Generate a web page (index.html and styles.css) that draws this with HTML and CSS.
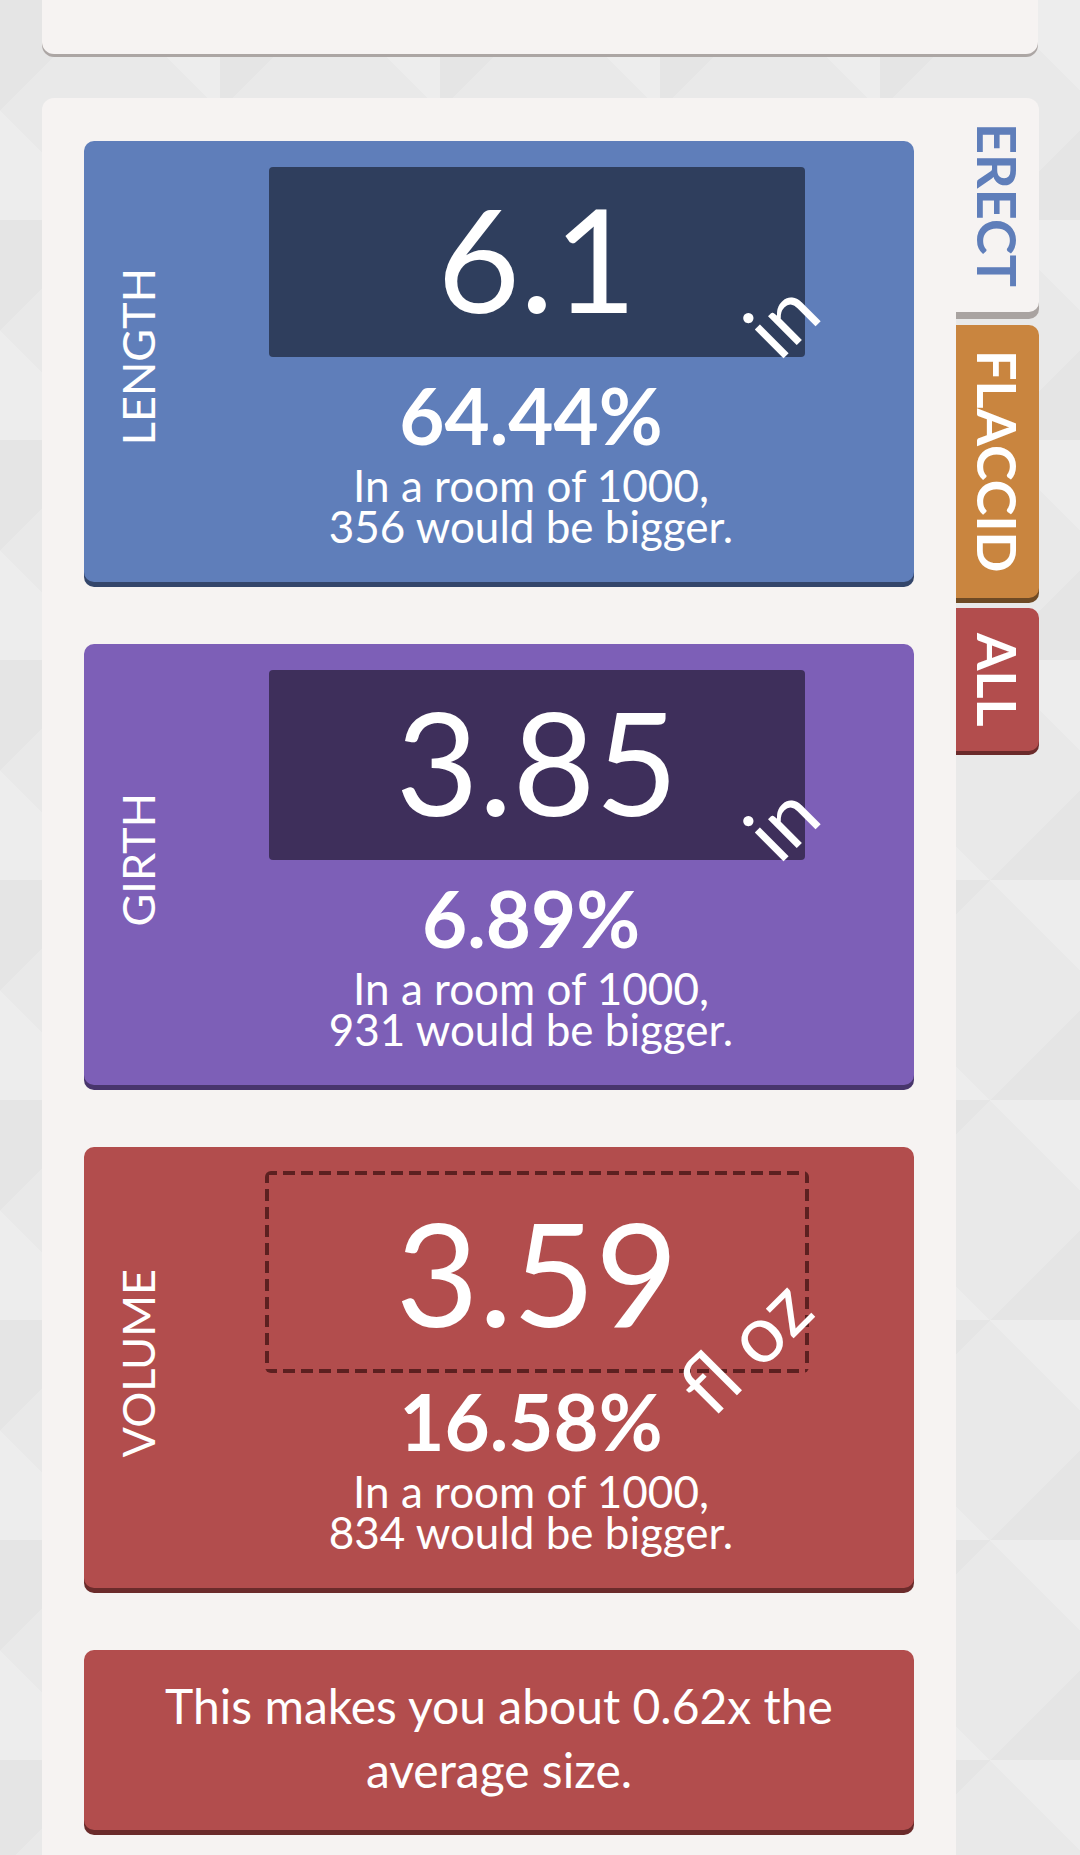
FILE: index.html
```html
<!DOCTYPE html>
<html lang="en">
<head>
    <meta charset="UTF-8">
    <meta name="viewport" content="width=device-width, initial-scale=1.0">
    <title>Size Calculator</title>
    <link rel="stylesheet" href="styles.css">
</head>
<body>
    <div class="top-card"></div>

    <main class="calc">
        <section class="results">
            <div class="stat stat-length">
                <div class="stat-label">LENGTH</div>
                <div class="stat-body">
                    <div class="value-box">
                        <span class="value">6.1</span>
                        <span class="unit">in</span>
                    </div>
                    <div class="percent">64.44%</div>
                    <p class="room">In a room of 1000,<br>356 would be bigger.</p>
                </div>
            </div>

            <div class="stat stat-girth">
                <div class="stat-label">GIRTH</div>
                <div class="stat-body">
                    <div class="value-box">
                        <span class="value">3.85</span>
                        <span class="unit">in</span>
                    </div>
                    <div class="percent">6.89%</div>
                    <p class="room">In a room of 1000,<br>931 would be bigger.</p>
                </div>
            </div>

            <div class="stat stat-volume">
                <div class="stat-label">VOLUME</div>
                <div class="stat-body">
                    <div class="value-box dashed">
                        <span class="value">3.59</span>
                        <span class="unit">fl oz</span>
                    </div>
                    <div class="percent">16.58%</div>
                    <p class="room">In a room of 1000,<br>834 would be bigger.</p>
                </div>
            </div>

            <div class="summary">This makes you about 0.62x the average size.</div>
        </section>

        <nav class="tabs">
            <a class="tab active" href="#">ERECT</a>
            <a class="tab flaccid" href="#">FLACCID</a>
            <a class="tab all" href="#">ALL</a>
        </nav>
    </main>
</body>
</html>
```

FILE: styles.css
```css
body {
    margin: 0;
    font-family: Lato, "Open Sans", sans-serif;
    color: #fff;
    background-color: #e9e9e9;
    background-image:
        linear-gradient(45deg, rgba(255, 255, 255, 0.2) 25%, transparent 25%, transparent 75%, rgba(255, 255, 255, 0.2) 75%),
        linear-gradient(-45deg, rgba(0, 0, 0, 0.015) 25%, transparent 25%, transparent 75%, rgba(0, 0, 0, 0.015) 75%);
    background-size: 220px 220px;
}

.top-card {
    height: 54px;
    margin: 0 42px;
    background-color: #f6f3f2;
    border-radius: 0 0 12px 12px;
    box-shadow: 0 3px 0 #aca6a4;
}

.calc {
    display: flex;
    align-items: flex-start;
    margin: 44px 41px 0 42px;
}

.results {
    flex: 1;
    padding: 43px 42px 43px 42px;
    background-color: #f6f3f2;
    border-radius: 12px 0 0 0;
}

/* measurement cards */
.stat {
    display: flex;
    padding: 26px 0 35px 0;
    margin-bottom: 62px;
    border-radius: 10px;
}

.stat-length {
    background-color: #5f7eba;
    box-shadow: 0 5px 0 #34466b;
}

.stat-girth {
    background-color: #7d5fb7;
    box-shadow: 0 5px 0 #48356c;
}

.stat-volume {
    background-color: #b24d4d;
    box-shadow: 0 5px 0 #6b2b2b;
}

.stat-label {
    writing-mode: vertical-rl;
    transform: rotate(180deg);
    align-self: center;
    width: 44px;
    margin-left: 32px;
    font-size: 45px;
    line-height: 44px;
}

.stat-body {
    flex: 1;
    text-align: center;
}

.value-box {
    position: relative;
    box-sizing: border-box;
    display: flex;
    align-items: center;
    justify-content: center;
    width: 536px;
    height: 190px;
    margin: 0 auto;
    padding-bottom: 10px;
    border-radius: 4px;
}

.stat-length .value-box {
    background-color: #2f3e5d;
}

.stat-girth .value-box {
    background-color: #3e2f5b;
}

/* volume has no filled box, only a dashed frame a little larger */
.value-box.dashed {
    width: 544px;
    height: 202px;
    margin: -2px auto -10px auto;
    padding-bottom: 2px;
    border-radius: 6px;
    background:
        repeating-linear-gradient(90deg, #5c2020 0 12px, transparent 12px 18px) left top / 100% 4px no-repeat,
        repeating-linear-gradient(90deg, #5c2020 0 12px, transparent 12px 18px) left bottom / 100% 4px no-repeat,
        repeating-linear-gradient(180deg, #5c2020 0 12px, transparent 12px 18px) left top / 4px 100% no-repeat,
        repeating-linear-gradient(180deg, #5c2020 0 12px, transparent 12px 18px) right top / 4px 100% no-repeat;
}

.value {
    font-size: 143px;
    line-height: 1;
}

.unit {
    position: absolute;
    right: -7px;
    bottom: -1px;
    font-size: 80px;
    line-height: 80px;
    white-space: nowrap;
    transform: rotate(-45deg);
}

.dashed .unit {
    right: -8px;
    bottom: -12px;
}

.percent {
    margin-top: 16px;
    padding-right: 12px;
    font-size: 78px;
    font-weight: bold;
    line-height: 84px;
}

.room {
    margin: 8px 0 0 0;
    padding-right: 12px;
    font-size: 44px;
    line-height: 41px;
}

.summary {
    padding: 24px 30px 28px 30px;
    font-size: 48px;
    line-height: 64px;
    text-align: center;
    background-color: #b24d4d;
    border-radius: 10px;
    box-shadow: 0 5px 0 #6b2b2b;
}

/* side tabs */
.tabs {
    display: flex;
    flex-direction: column;
    width: 83px;
}

.tab {
    writing-mode: vertical-rl;
    padding: 25px 0;
    margin-bottom: 10px;
    font-size: 54px;
    font-weight: bold;
    line-height: 83px;
    color: #fff;
    text-decoration: none;
    border-radius: 0 10px 10px 0;
}

.tab.active {
    margin-bottom: 13px;
    color: #5f7eba;
    background-color: #f6f3f2;
    border-radius: 0 12px 10px 0;
    box-shadow: 0 7px 0 #a9a3a1;
}

.tab.flaccid {
    background-color: #c9853f;
    box-shadow: 0 5px 0 #6e4a25;
}

.tab.all {
    background-color: #b24d4d;
    box-shadow: 0 4px 0 #6b2b2b;
}
```
